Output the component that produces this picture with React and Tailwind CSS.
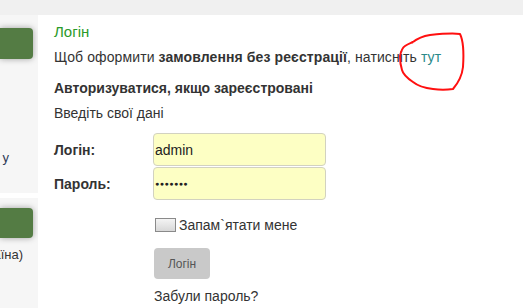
import React from "react";

function Sidebar() {
  return (
    <div className="w-[38px] shrink-0 flex flex-col gap-[5px] overflow-hidden">
      <div className="h-[178px] bg-[#f6f6f6] pt-[13px] flex flex-col">
        <div className="w-[33px] h-[31px] bg-[#547c44] rounded-r-[4px] shadow-[0_0_6px_rgba(0,0,0,0.35)]" />
        <div className="mt-[91px] w-[9px] whitespace-nowrap flex justify-end text-[13px] leading-[16px] text-[#2c3a55]">
          <span>у</span>
        </div>
      </div>
      <div className="flex-1 bg-[#f6f6f6] pt-[10px] flex flex-col">
        <div className="w-[33px] h-[30px] bg-[#547c44] rounded-r-[4px] shadow-[0_0_6px_rgba(0,0,0,0.35)]" />
        <div className="mt-[9px] w-[23px] flex justify-end whitespace-nowrap text-[13px] leading-[16px] text-[#333]">
          <span>(Україна)</span>
        </div>
      </div>
    </div>
  );
}

function Scribble() {
  return (
    <svg className="absolute left-0 top-0 pointer-events-none" width="523" height="308">
      <path
        d="M413 42 C418 38 424 36 430 35 C440 34 452 33 460 34 C463 40 464 52 463 67 C462 76 459 82 453 89 C446 90 440 90 433 89 C424 88 418 86 413 82 C407 78 403 74 402 70 C400 64 400 60 400 56 C401 51 402 48 405 46 C408 44 411 43 413 42"
        fill="none"
        stroke="#ff1010"
        strokeWidth="2"
        strokeLinejoin="round"
      />
    </svg>
  );
}

export default function App() {
  return (
    <div className="relative w-[523px] h-[308px] bg-white overflow-hidden" style={{ fontFamily: '"Liberation Sans", Arial, sans-serif' }}>
      <div className="h-[15px] bg-[#f0f0f0]" />
      <div className="flex h-[293px]">
        <Sidebar />
        <div className="flex-1 pl-[16px] pt-[8px] text-[#333]">
          <div className="text-[15px] leading-[18px] text-[#2a9a2a]">Логін</div>
          <div className="mt-[8px] text-[14px] leading-[16px] tracking-[0.1px]">
            Щоб оформити <b>замовлення без реєстрації</b>, натисніть <span className="text-[#2a8a8a]">тут</span>
          </div>
          <div className="mt-[15px] text-[14px] leading-[16px] font-bold">Авторизуватися, якщо зареєстровані</div>
          <div className="mt-[9px] text-[14px] leading-[16px]">Введіть свої дані</div>

          <div className="mt-[12px] flex flex-col gap-[1px]">
            <div className="flex items-center">
              <label className="w-[99px] text-[14px] leading-[16px] font-bold">Логін:</label>
              <div className="w-[173px] h-[33px] bg-[#fdffc4] border border-[#d2d2c0] rounded-[4px] flex items-center px-[1px] text-[14px] leading-[16px] text-[#222]">admin</div>
            </div>
            <div className="flex items-center">
              <label className="w-[99px] text-[14px] leading-[16px] font-bold">Пароль:</label>
              <div className="w-[173px] h-[33px] bg-[#fdffc4] border border-[#d2d2c0] rounded-[4px] flex items-center px-[1px] text-[7px] leading-[16px] tracking-[0.5px] text-[#222]">●●●●●●●</div>
            </div>
          </div>

          <div className="ml-[101px] mt-[17px] h-[16px] flex items-center gap-[3px]">
            <div className="w-[21px] h-[14px] border border-[#8a8a8a] bg-gradient-to-b from-[#f4f4f4] to-[#d8d8d8]" />
            <span className="text-[14px] leading-[16px]">Запам`ятати мене</span>
          </div>

          <div className="ml-[100px] mt-[15px]">
            <div className="w-[56px] h-[31px] bg-[#c9c9c9] rounded-[4px] flex items-center justify-center text-[12px] leading-[14px] text-[#555]">Логін</div>
          </div>

          <div className="ml-[100px] mt-[9px] text-[14px] leading-[16px]">Забули пароль?</div>
        </div>
      </div>
      <Scribble />
    </div>
  );
}
